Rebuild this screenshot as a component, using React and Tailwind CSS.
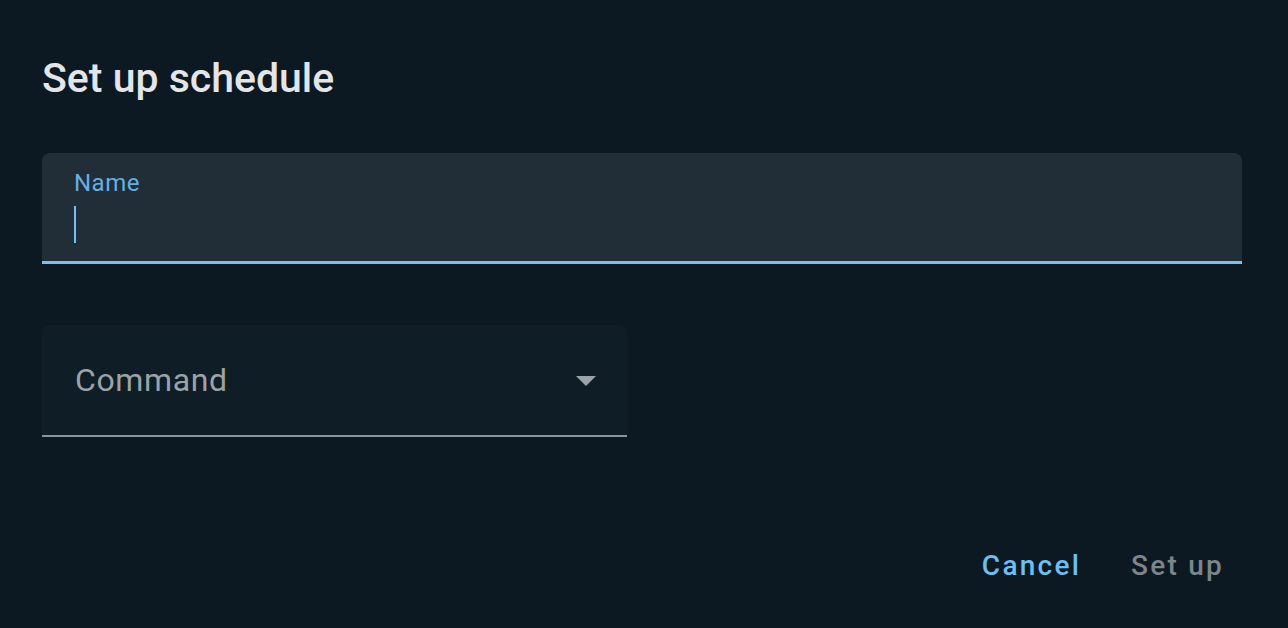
import React from 'react';

export default function App() {
  return (
    <div className="min-h-[628px] w-full bg-[#0c1922] pl-[42px] pr-[46px] pt-[52px] font-['Roboto',sans-serif]">
      <h1 className="text-[41px] font-medium leading-[52px] text-[#e3e5e8]">Set up schedule</h1>

      {/* Name field, focused */}
      <div className="mt-[49px] h-[111px] rounded-t-[8px] border-b-[3px] border-[#74c2f5] bg-[#212e38] px-[32px] pt-[16px]">
        <div className="text-[24px] leading-[28px] tracking-[0.02em] text-[#65b0e3]">Name</div>
        <div className="mt-[9px] h-[37px] w-[2px] bg-[#74c2f5]" />
      </div>

      {/* Command select */}
      <div className="mt-[61px] flex h-[112px] w-[585px] items-center justify-between rounded-t-[8px] border-b-2 border-[#8a9398] bg-[#0e1d26] pl-[33px] pr-[31px]">
        <span className="text-[32px] tracking-[0.02em] text-[#9ba3a8]">Command</span>
        <svg width="20" height="10" viewBox="0 0 20 10" className="mt-[2px]">
          <path d="M0 0 L20 0 L10 10 Z" fill="#9ba3a8" />
        </svg>
      </div>

      {/* Actions */}
      <div className="mt-[108px] flex justify-end gap-[50px] pr-[18px]">
        <button className="text-[28px] font-medium tracking-[0.08em] text-[#6fbef2]">Cancel</button>
        <button className="text-[28px] font-medium tracking-[0.08em] text-[#7d858b]">Set up</button>
      </div>
    </div>
  );
}
